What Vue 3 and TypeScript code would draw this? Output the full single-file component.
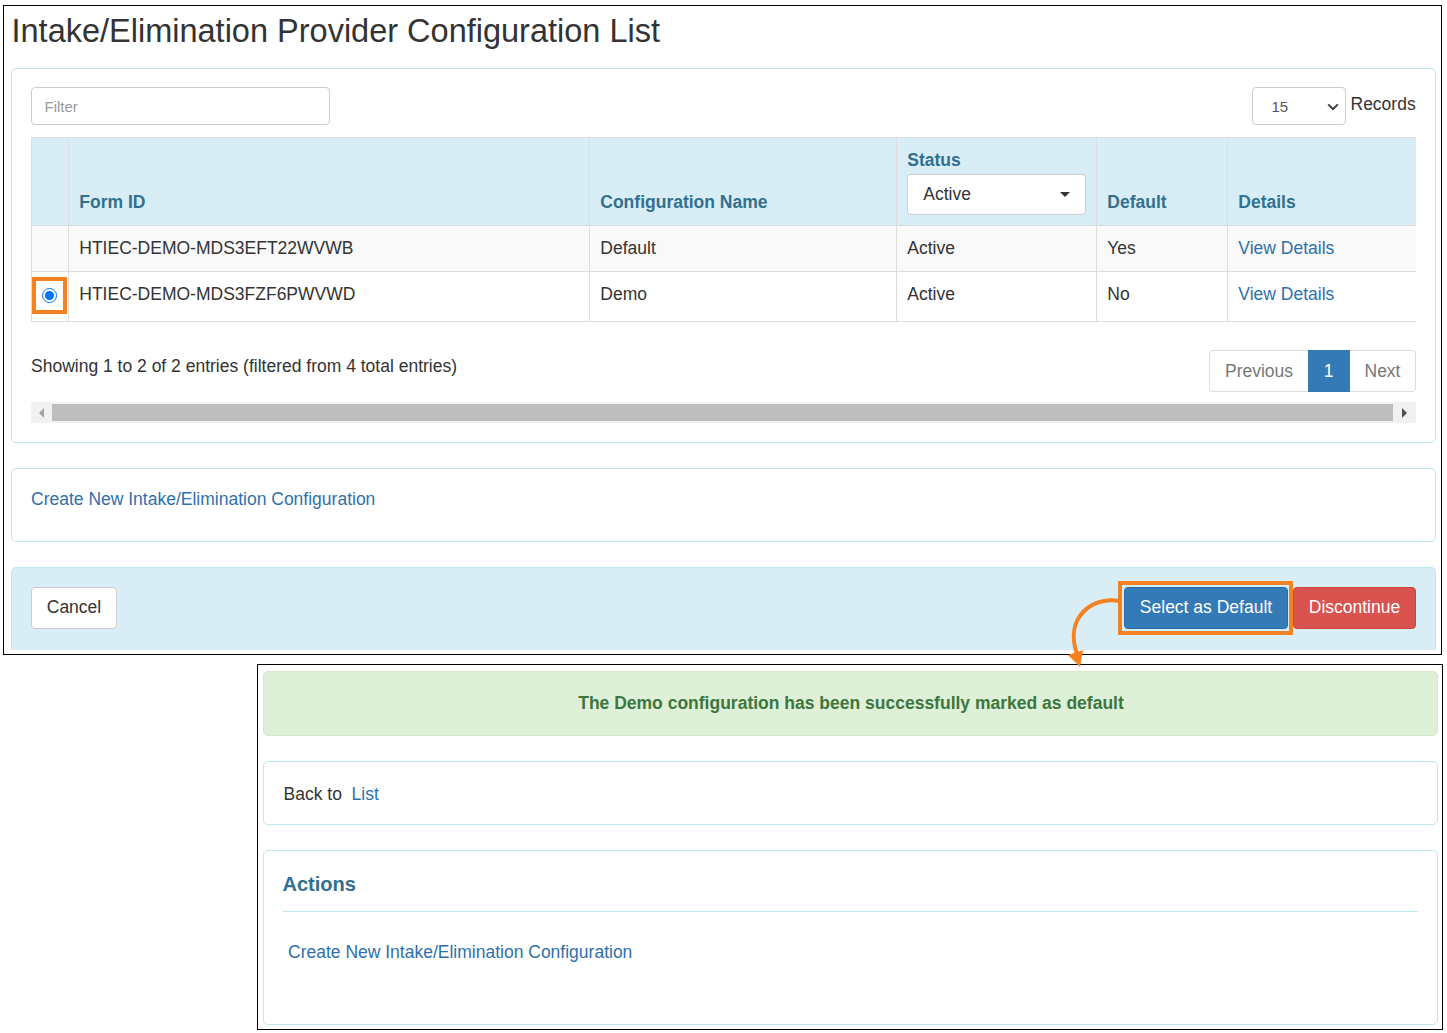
<script setup lang="ts">
interface Row { id: string; name: string; status: string; def: string; picked: boolean }
const rows: Row[] = [
  { id: 'HTIEC-DEMO-MDS3EFT22WVWB', name: 'Default', status: 'Active', def: 'Yes', picked: false },
  { id: 'HTIEC-DEMO-MDS3FZF6PWVWD', name: 'Demo', status: 'Active', def: 'No', picked: true },
]
</script>

<template>
  <div class="page">
    <section class="frame top">
      <h1>Intake/Elimination Provider Configuration List</h1>

      <div class="panel list">
        <div class="tools">
          <input class="filter" placeholder="Filter" />
          <div class="records">
            <span class="size-wrap">
              <select class="size"><option>15</option></select>
              <svg class="chev" width="12" height="8" viewBox="0 0 12 8" aria-hidden="true">
                <path d="M1.2 1.4 L6 6 L10.8 1.4" fill="none" stroke="#444" stroke-width="2" />
              </svg>
            </span>
            <span class="records-label">Records</span>
          </div>
        </div>

        <table>
          <colgroup>
            <col class="c0" /><col class="c1" /><col class="c2" /><col class="c3" /><col class="c4" /><col class="c5" />
          </colgroup>
          <thead>
            <tr>
              <th></th>
              <th>Form ID</th>
              <th>Configuration Name</th>
              <th>
                <div class="status-label">Status</div>
                <div class="status-btn"><span>Active</span><i class="caret"></i></div>
              </th>
              <th>Default</th>
              <th>Details</th>
            </tr>
          </thead>
          <tbody>
            <tr v-for="r in rows" :key="r.id" :class="{ striped: !r.picked, tall: r.picked }">
              <td class="radio-cell">
                <span v-if="r.picked" class="radio-mark"><input type="radio" checked /></span>
              </td>
              <td>{{ r.id }}</td>
              <td>{{ r.name }}</td>
              <td>{{ r.status }}</td>
              <td>{{ r.def }}</td>
              <td><a>View Details</a></td>
            </tr>
          </tbody>
        </table>

        <div class="info-row">
          <span class="info">Showing 1 to 2 of 2 entries (filtered from 4 total entries)</span>
          <div class="pager">
            <span class="pg prev">Previous</span>
            <span class="pg cur">1</span>
            <span class="pg next">Next</span>
          </div>
        </div>

        <div class="scroll">
          <span class="arrow-box"><i class="tri left"></i></span>
          <span class="thumb"></span>
          <span class="arrow-box"><i class="tri right"></i></span>
        </div>
      </div>

      <div class="panel create">
        <a>Create New Intake/Elimination Configuration</a>
      </div>

      <div class="footer">
        <button class="btn cancel">Cancel</button>
        <div class="footer-right">
          <span class="mark"><button class="btn primary">Select as Default</button></span>
          <button class="btn danger">Discontinue</button>
        </div>
      </div>
    </section>

    <section class="frame bottom">
      <div class="alert">The Demo configuration has been successfully marked as default</div>
      <div class="panel back">Back to&nbsp; <a>List</a></div>
      <div class="panel actions">
        <h2>Actions</h2>
        <a class="action-link">Create New Intake/Elimination Configuration</a>
      </div>
    </section>

    <svg class="arrow" width="52" height="72" viewBox="0 0 52 72" aria-hidden="true">
      <path d="M50 4 C 24 -1, -5 20, 8 57" fill="none" stroke="#f58220" stroke-width="4" />
      <path d="M-1 58 L14 53 L11 70 Z" fill="#f58220" />
    </svg>
  </div>
</template>

<style>
html, body { margin: 0; background: #fff; }
</style>

<style scoped>
.page {
  position: relative;
  width: 1447px;
  height: 1033px;
  padding: 5px 0 0 3px;
  box-sizing: border-box;
  font-family: "Liberation Sans", Arial, sans-serif;
  font-size: 17.5px;
  line-height: 25px;
  color: #333;
  overflow: hidden;
}
a { color: #2f70ab; }
.frame { box-sizing: border-box; border: 1.5px solid #000; background: #fff; }
.top {
  width: 1439px;
  height: 650px;
  padding: 0 5.5px 0 6.5px;
}
h1 {
  margin: 0;
  height: 62px;
  padding: 6px 0 0 1px;
  box-sizing: border-box;
  font-size: 32.5px;
  line-height: 38px;
  font-weight: 400;
}
.panel {
  box-sizing: border-box;
  border: 1px solid #bce8f1;
  border-radius: 5px;
  background: #fff;
}
.list {
  height: 375px;
  padding: 18px 19px 0;
}
.tools { display: flex; justify-content: space-between; height: 50px; }
.filter {
  box-sizing: border-box;
  width: 299px;
  height: 38px;
  padding: 0 13px;
  border: 1px solid #ccc;
  border-radius: 4px;
  font: 15px "Liberation Sans", Arial, sans-serif;
  color: #555;
  outline: none;
}
.filter::placeholder { color: #999; opacity: 1; }
.records { display: flex; align-items: flex-start; gap: 5px; }
.size-wrap { position: relative; display: block; width: 94px; height: 38px; }
.size {
  appearance: none;
  box-sizing: border-box;
  display: block;
  width: 94px;
  height: 38px;
  padding: 0 0 0 19px;
  border: 1px solid #ccc;
  border-radius: 4px;
  background: #fff;
  color: #555;
  font: 15px "Liberation Sans", Arial, sans-serif;
}
.chev { position: absolute; left: 75px; top: 16px; pointer-events: none; }
.records-label { line-height: 34px; width: 65px; white-space: nowrap; }
table {
  width: 1385px;
  table-layout: fixed;
  border-collapse: collapse;
  border-top: 1px solid #ddd;
  border-bottom: 1px solid #ddd;
}
.c0 { width: 37px; }
.c1 { width: 521px; }
.c2 { width: 307px; }
.c3 { width: 200px; }
.c4 { width: 131px; }
.c5 { width: 189px; }
th, td {
  box-sizing: border-box;
  padding: 0 10px 0 10.8px;
  text-align: left;
  border-left: 1px solid #ddd;
}
thead tr { height: 88px; background: #d9edf7; }
th {
  vertical-align: bottom;
  padding-bottom: 10px;
  color: #31708f;
  font-weight: 700;
}
.status-label { line-height: 22px; margin-bottom: 3px; }
.status-btn {
  box-sizing: border-box;
  display: flex;
  align-items: center;
  justify-content: space-between;
  width: 179px;
  height: 41px;
  padding: 0 15px;
  margin-top: 2px;
  border: 1px solid #ccc;
  border-radius: 4px;
  background: #fff;
  color: #333;
  font-weight: 400;
}
.caret {
  width: 0;
  height: 0;
  border-left: 5px solid transparent;
  border-right: 5px solid transparent;
  border-top: 5px solid #333;
}
tbody tr { height: 46px; border-top: 1px solid #ddd; }
tbody tr.tall { height: 50px; }
tbody tr.tall td { padding-bottom: 5px; }
tr.striped { background: #f9f9f9; }
.radio-cell { padding: 0; position: relative; }
.radio-mark {
  position: absolute;
  left: 0;
  top: 5px;
  box-sizing: border-box;
  width: 35px;
  height: 37px;
  border: 4px solid #f58220;
  display: flex;
  align-items: center;
  justify-content: center;
}
.radio-mark input { width: 15px; height: 15px; margin: 0; }
.info-row {
  display: flex;
  justify-content: space-between;
  align-items: flex-start;
  margin-top: 28px;
}
.info { line-height: 32px; padding-left: 0.5px; }
.pager {
  display: flex;
  height: 42px;
  box-sizing: border-box;
}
.pg {
  box-sizing: border-box;
  display: flex;
  align-items: center;
  justify-content: center;
  border: 1px solid #ddd;
  color: #777;
}
.prev { width: 99px; padding-left: 1px; border-right: 0; border-radius: 4px 0 0 4px; }
.cur { width: 42px; background: #337ab7; border-color: #337ab7; color: #fff; }
.next { width: 66px; padding-left: 1px; border-left: 0; border-radius: 0 4px 4px 0; }
.scroll {
  display: flex;
  align-items: center;
  height: 21px;
  margin-top: 10px;
  background: #f1f1f1;
}
.arrow-box {
  width: 21px;
  height: 20px;
  display: flex;
  align-items: center;
  justify-content: center;
  flex: none;
}
.arrow-box:last-child { width: 23px; }
.thumb { flex: 1; height: 17px; background: #bebebe; }
.tri { width: 0; height: 0; border-top: 5px solid transparent; border-bottom: 5px solid transparent; }
.tri.left { border-right: 5px solid #a3a3a3; }
.tri.right { border-left: 5px solid #505050; }
.create {
  height: 74px;
  margin-top: 25px;
  padding: 18px 19px 0 19.5px;
}
.footer {
  box-sizing: border-box;
  display: flex;
  justify-content: space-between;
  align-items: flex-start;
  height: 83px;
  margin-top: 25px;
  padding: 13px 19px 0;
  background: #d9edf7;
  border: 1px solid #bce8f1;
  border-bottom: 0;
  border-radius: 5px 5px 0 0;
}
.btn {
  box-sizing: border-box;
  height: 42px;
  padding: 0 0 2px 1px;
  border: 1px solid transparent;
  border-radius: 4px;
  font: 17.5px "Liberation Sans", Arial, sans-serif;
  white-space: nowrap;
  flex: none;
}
.cancel { width: 86px; margin-top: 6px; background: #fff; border-color: #ccc; color: #333; }
.footer-right { display: flex; align-items: center; }
.mark {
  display: flex;
  box-sizing: border-box;
  width: 175px;
  height: 54px;
  padding: 2px 1px 2px 2px;
  border: 4px solid #f58220;
}
.primary { width: 164px; background: #337ab7; border-color: #2e6da4; color: #fff; }
.danger { width: 123px; background: #d9534f; border-color: #d43f3a; color: #fff; }
.bottom {
  position: relative;
  width: 1186px;
  height: 366px;
  margin: 9px 0 0 254px;
  padding: 5.5px 4.5px 0 4.5px;
}
.alert {
  box-sizing: border-box;
  height: 65px;
  padding-left: 2px;
  line-height: 63px;
  text-align: center;
  background: #dff0d8;
  border: 1px solid #d6e9c6;
  border-radius: 5px;
  color: #3c763d;
  font-weight: 700;
}
.back {
  height: 64px;
  margin-top: 25px;
  padding: 20px 20px 0;
}
.actions {
  height: 175px;
  margin-top: 25px;
  padding: 0 19px;
}
h2 {
  margin: 0;
  height: 61px;
  padding-top: 21px;
  box-sizing: border-box;
  font-size: 20px;
  line-height: 25px;
  font-weight: 700;
  color: #31708f;
  border-bottom: 1px solid #bce8f1;
}
.action-link { display: block; padding: 28px 0 0 5.5px; }
.arrow {
  position: absolute;
  left: 1069px;
  top: 597px;
  z-index: 2;
  overflow: visible;
}
</style>
